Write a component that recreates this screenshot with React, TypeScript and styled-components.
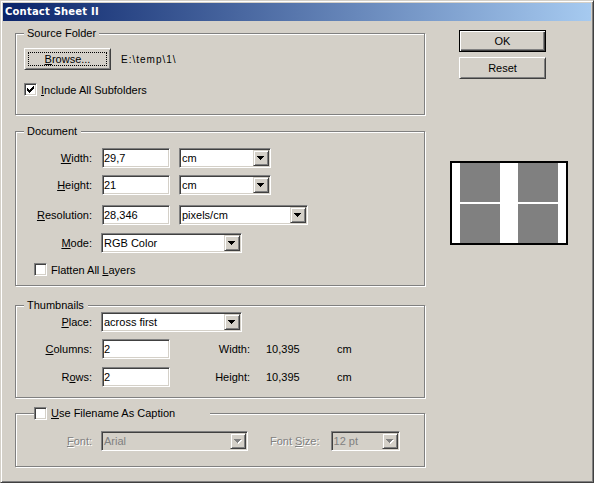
import styled, { createGlobalStyle } from "styled-components";

const GlobalStyle = createGlobalStyle`
  html, body {
    margin: 0;
    padding: 0;
    background: #d4d0c8;
  }
  body {
    font-family: "Liberation Sans", Arial, sans-serif;
    font-size: 11px;
    color: #000;
  }
`;

const Window = styled.div`
  box-sizing: border-box;
  width: 594px;
  height: 483px;
  background: #d4d0c8;
  border: 1px solid;
  border-color: #d4d0c8 #404040 #404040 #d4d0c8;
  box-shadow: inset 1px 1px 0 #fff, inset -1px -1px 0 #808080;
  padding: 2px;
  display: flex;
  flex-direction: column;
`;

const TitleBar = styled.div`
  height: 18px;
  line-height: 18px;
  padding-left: 2px;
  background: linear-gradient(to right, #0a246a, #a6caf0);
  color: #fff;
  font-family: "DejaVu Sans", "Liberation Sans", sans-serif;
  font-weight: bold;
  font-size: 10px;
  letter-spacing: 0.2px;
`;

const Body = styled.div`
  display: flex;
  padding: 9px 0 0 12px;
`;

const LeftCol = styled.div`
  width: 410px;
  display: flex;
  flex-direction: column;
`;

const RightCol = styled.div`
  margin-left: 25px;
  display: flex;
  flex-direction: column;
  align-items: flex-start;
`;

const Group = styled.div<{ $gap: number; $pad: number }>`
  margin-top: ${(p) => p.$gap}px;
  border: 1px solid #808080;
  box-shadow: 1px 1px 0 #fff, inset 1px 1px 0 #fff;
  padding-bottom: ${(p) => p.$pad}px;
  display: flex;
  flex-direction: column;
`;

const Legend = styled.div<{ $indent: number; $padL: number; $padR: number }>`
  display: flex;
  align-items: center;
  gap: 4px;
  height: 13px;
  line-height: 13px;
  margin: -7px 0 0 ${(p) => p.$indent}px;
  padding: 0 ${(p) => p.$padR}px 0 ${(p) => p.$padL}px;
  background: #d4d0c8;
  align-self: flex-start;
  white-space: nowrap;
`;

const Row = styled.div<{ $top: number; $left?: number; $h?: number }>`
  display: flex;
  align-items: center;
  height: ${(p) => p.$h ?? 20}px;
  margin-top: ${(p) => p.$top}px;
  margin-left: ${(p) => p.$left ?? 0}px;
`;

const Label = styled.span<{ $disabled?: boolean }>`
  width: 76px;
  margin-right: 9px;
  flex: none;
  text-align: right;
  white-space: nowrap;
  color: ${(p) => (p.$disabled ? "#808080" : "#000")};
  text-shadow: ${(p) => (p.$disabled ? "1px 1px 0 #fff" : "none")};
`;

const TextBox = styled.input`
  box-sizing: border-box;
  width: 68px;
  height: 20px;
  margin: 0 0 0 1px;
  padding: 0 0 0 1px;
  border: 1px solid;
  border-color: #808080 #fff #fff #808080;
  box-shadow: inset 1px 1px 0 #404040, inset -1px -1px 0 #d4d0c8;
  background: #fff;
  font: inherit;
  color: #000;
  outline: none;
`;

const Combo = styled.div<{ $w: number; $ml?: number; $disabled?: boolean }>`
  box-sizing: border-box;
  display: flex;
  width: ${(p) => p.$w}px;
  height: 20px;
  margin-left: ${(p) => p.$ml ?? 0}px;
  padding: 1px;
  border: 1px solid;
  border-color: #808080 #fff #fff #808080;
  box-shadow: inset 1px 1px 0 #404040, inset -1px -1px 0 #d4d0c8;
  background: ${(p) => (p.$disabled ? "#d4d0c8" : "#fff")};
  color: ${(p) => (p.$disabled ? "#808080" : "#000")};
`;

const ComboText = styled.span`
  flex: 1;
  padding-left: 1px;
  line-height: 16px;
  white-space: nowrap;
  overflow: hidden;
`;

const ComboButton = styled.span`
  box-sizing: border-box;
  width: 16px;
  height: 16px;
  flex: none;
  display: flex;
  align-items: center;
  justify-content: center;
  background: #d4d0c8;
  border: 1px solid;
  border-color: #d4d0c8 #404040 #404040 #d4d0c8;
  box-shadow: inset 1px 1px 0 #fff, inset -1px -1px 0 #808080;
`;

const Box = styled.span`
  box-sizing: border-box;
  width: 13px;
  height: 13px;
  flex: none;
  display: flex;
  align-items: center;
  justify-content: center;
  border: 1px solid;
  border-color: #808080 #fff #fff #808080;
  box-shadow: inset 1px 1px 0 #404040, inset -1px -1px 0 #d4d0c8;
  background: #fff;
`;

const CheckRow = styled.div<{ $top: number; $left: number }>`
  display: flex;
  align-items: center;
  gap: 4px;
  height: 13px;
  margin-top: ${(p) => p.$top}px;
  margin-left: ${(p) => p.$left}px;
  white-space: nowrap;
`;

const Button = styled.button<{ $default?: boolean; $top?: number; $left?: number }>`
  box-sizing: border-box;
  width: 87px;
  height: 22px;
  flex: none;
  margin: ${(p) => p.$top ?? 0}px 0 0 ${(p) => p.$left ?? 0}px;
  padding: ${(p) => (p.$default ? "2px" : "3px")};
  display: flex;
  align-items: center;
  justify-content: center;
  font: inherit;
  color: #000;
  background: #d4d0c8;
  border: 1px solid;
  border-color: ${(p) =>
    p.$default ? "#000" : "#fff #404040 #404040 #fff"};
  box-shadow: ${(p) =>
    p.$default
      ? "inset 1px 1px 0 #fff, inset -1px -1px 0 #404040, inset -2px -2px 0 #808080"
      : "inset 1px 1px 0 #d4d0c8, inset -1px -1px 0 #808080"};
`;

const FocusRing = styled.span`
  box-sizing: border-box;
  width: 100%;
  height: 100%;
  display: flex;
  align-items: center;
  justify-content: center;
  border: 1px dotted #000;
`;

const PathText = styled.span`
  margin-left: 10px;
  font-size: 10px;
  letter-spacing: 1px;
`;

const InfoLabel = styled.span`
  width: 80px;
  text-align: right;
  flex: none;
`;

const InfoValue = styled.span`
  width: 71px;
  margin-left: 16px;
  flex: none;
`;

const SideLabel = styled(Label)`
  width: auto;
  margin: 0 11px 0 22px;
`;

const Preview = styled.div`
  box-sizing: border-box;
  width: 118px;
  height: 84px;
  margin-top: 82px;
  border: 2px solid #000;
  background: #fff;
  padding: 0 8px;
  display: grid;
  grid-template-columns: 40px 40px;
  grid-template-rows: 39px 39px;
  column-gap: 18px;
  row-gap: 2px;
`;

const Cell = styled.div`
  background: #808080;
`;

const Arrow = ({ disabled }: { disabled?: boolean }) => (
  <svg width="8" height="5" viewBox="0 0 8 5" shapeRendering="crispEdges">
    {disabled && <polygon points="1,1 8,1 4.5,5" fill="#fff" />}
    <polygon points="0,0 7,0 3.5,4" fill={disabled ? "#808080" : "#000"} />
  </svg>
);

const Dropdown = ({
  value,
  w,
  ml,
  disabled,
}: {
  value: string;
  w: number;
  ml?: number;
  disabled?: boolean;
}) => (
  <Combo $w={w} $ml={ml} $disabled={disabled}>
    <ComboText>{value}</ComboText>
    <ComboButton>
      <Arrow disabled={disabled} />
    </ComboButton>
  </Combo>
);

const CheckBox = ({ checked }: { checked?: boolean }) => (
  <Box>
    {checked && (
      <svg width="7" height="7" viewBox="0 0 7 7" shapeRendering="crispEdges">
        <polygon points="0,2 2,4 6,0 7,0 7,3 2,7 0,5" fill="#000" />
      </svg>
    )}
  </Box>
);

export default function App() {
  return (
    <>
      <GlobalStyle />
      <Window>
        <TitleBar>Contact Sheet II</TitleBar>
        <Body>
          <LeftCol>
            <Group $gap={3} $pad={18}>
              <Legend $indent={8} $padL={3} $padR={3}>
                Source Folder
              </Legend>
              <Row $top={8} $left={8} $h={22}>
                <Button>
                  <FocusRing>
                    <span>
                      <u>B</u>rowse...
                    </span>
                  </FocusRing>
                </Button>
                <PathText>E:\temp\1\</PathText>
              </Row>
              <CheckRow $top={13} $left={8}>
                <CheckBox checked />
                <span>
                  <u>I</u>nclude All Subfolders
                </span>
              </CheckRow>
            </Group>

            <Group $gap={16} $pad={9}>
              <Legend $indent={8} $padL={3} $padR={4}>
                Document
              </Legend>
              <Row $top={10}>
                <Label>
                  <u>W</u>idth:
                </Label>
                <TextBox readOnly defaultValue="29,7" />
                <Dropdown value="cm" w={92} ml={9} />
              </Row>
              <Row $top={7}>
                <Label>
                  <u>H</u>eight:
                </Label>
                <TextBox readOnly defaultValue="21" />
                <Dropdown value="cm" w={92} ml={9} />
              </Row>
              <Row $top={10}>
                <Label>
                  <u>R</u>esolution:
                </Label>
                <TextBox readOnly defaultValue="28,346" />
                <Dropdown value="pixels/cm" w={129} ml={9} />
              </Row>
              <Row $top={8}>
                <Label>
                  <u>M</u>ode:
                </Label>
                <Dropdown value="RGB Color" w={141} />
              </Row>
              <CheckRow $top={10} $left={18}>
                <CheckBox />
                <span>
                  Flatten All <u>L</u>ayers
                </span>
              </CheckRow>
            </Group>

            <Group $gap={19} $pad={10}>
              <Legend $indent={8} $padL={3} $padR={4}>
                Thumbnails
              </Legend>
              <Row $top={0}>
                <Label>
                  <u>P</u>lace:
                </Label>
                <Dropdown value="across first" w={141} />
              </Row>
              <Row $top={7}>
                <Label>
                  <u>C</u>olumns:
                </Label>
                <TextBox readOnly defaultValue="2" />
                <InfoLabel>Width:</InfoLabel>
                <InfoValue>10,395</InfoValue>
                <span>cm</span>
              </Row>
              <Row $top={8}>
                <Label>
                  R<u>o</u>ws:
                </Label>
                <TextBox readOnly defaultValue="2" />
                <InfoLabel>Height:</InfoLabel>
                <InfoValue>10,395</InfoValue>
                <span>cm</span>
              </Row>
            </Group>

            <Group $gap={15} $pad={15}>
              <Legend $indent={18} $padL={0} $padR={35}>
                <CheckBox />
                <span>
                  <u>U</u>se Filename As Caption
                </span>
              </Legend>
              <Row $top={11}>
                <Label $disabled>
                  <u>F</u>ont:
                </Label>
                <Dropdown value="Arial" w={147} disabled />
                <SideLabel $disabled>
                  Font <u>S</u>ize:
                </SideLabel>
                <Dropdown value="12 pt" w={69} disabled />
              </Row>
            </Group>
          </LeftCol>

          <RightCol>
            <Button $default $left={9}>
              OK
            </Button>
            <Button $top={5} $left={9}>
              Reset
            </Button>
            <Preview>
              <Cell />
              <Cell />
              <Cell />
              <Cell />
            </Preview>
          </RightCol>
        </Body>
      </Window>
    </>
  );
}
